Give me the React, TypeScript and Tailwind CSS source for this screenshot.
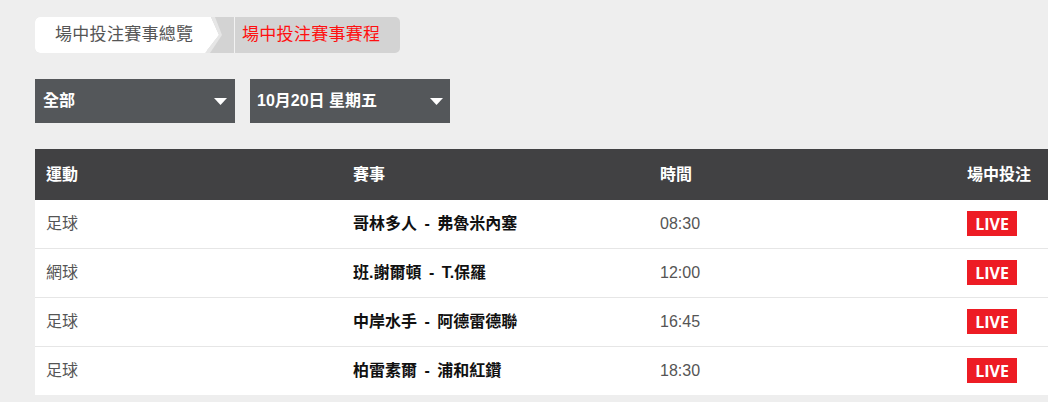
import React from "react";

const rows = [
  { sport: "足球", home: "哥林多人", away: "弗魯米內塞", time: "08:30" },
  { sport: "網球", home: "班.謝爾頓", away: "T.保羅", time: "12:00" },
  { sport: "足球", home: "中岸水手", away: "阿德雷德聯", time: "16:45" },
  { sport: "足球", home: "柏雷素爾", away: "浦和紅鑽", time: "18:30" },
];

const font = { fontFamily: '"Liberation Sans", "Noto Sans CJK TC", sans-serif' };

function Caret() {
  return (
    <svg width="13" height="7" viewBox="0 0 13 7" className="shrink-0">
      <polygon points="0,0 13,0 6.5,7" fill="#ffffff" />
    </svg>
  );
}

export default function App() {
  return (
    <div
      className="w-[1048px] h-[402px] bg-[#eeeeee] overflow-hidden pl-[35px] pt-[17px]"
      style={font}
    >
      {/* breadcrumb */}
      <div className="relative flex h-[36px] w-[365px] bg-[#d3d3d3] rounded-[5px]">
        <div className="flex items-center h-full w-[172px] bg-white rounded-l-[5px] pl-[20px] text-[17px] tracking-[0.3px] text-[#555555]">
          場中投注賽事總覽
        </div>
        <svg
          width="20"
          height="36"
          viewBox="0 0 20 36"
          className="absolute left-[170px] top-0"
        >
          <polygon points="0,0 6,0 14,18 0,36" fill="#ffffff" />
          <polygon points="6,0 10,0 17,18 5,36 0,36 14,18" fill="#e6e6e6" />
        </svg>
        <div className="ml-[27px] w-px h-full bg-[#f2f2f2]" />
        <div className="flex items-center h-full pl-[7px] text-[17px] tracking-[0.3px] text-[#ff1010]">
          場中投注賽事賽程
        </div>
      </div>

      {/* dropdowns */}
      <div className="flex gap-[15px] mt-[26px]">
        <div className="flex items-center justify-between w-[200px] h-[44px] bg-[#54575a] pl-[8px] pr-[8px] text-white font-bold text-[16px]">
          <span>全部</span>
          <Caret />
        </div>
        <div className="flex items-center justify-between w-[200px] h-[44px] bg-[#54575a] pl-[7px] pr-[7px] text-white font-bold text-[16px]">
          <span>10月20日 星期五</span>
          <Caret />
        </div>
      </div>

      {/* table */}
      <div className="mt-[26px] w-[1013px]">
        <div className="grid grid-cols-[307px_307px_307px_1fr] h-[51px] items-center bg-[#414143] text-white font-bold text-[16px]">
          <div className="pl-[11px]">運動</div>
          <div className="pl-[11px]">賽事</div>
          <div className="pl-[11px]">時間</div>
          <div className="pl-[11px]">場中投注</div>
        </div>
        {rows.map((r, i) => (
          <div
            key={i}
            className={
              i < rows.length - 1
                ? "grid grid-cols-[307px_307px_307px_1fr] h-[49px] items-center bg-white border-b border-[#e6e6e6]"
                : "grid grid-cols-[307px_307px_307px_1fr] h-[48px] items-center bg-white"
            }
          >
            <div className="pl-[11px] text-[16px] text-[#555555]">{r.sport}</div>
            <div className="pl-[11px] text-[16px] font-bold text-[#111111]">
              {r.home}
              <span className="mx-[3px]"> - </span>
              {r.away}
            </div>
            <div className="pl-[11px] text-[16px] text-[#555555]">{r.time}</div>
            <div className="pl-[11px]">
              <div
                className="inline-flex items-center justify-center w-[50px] h-[25px] bg-[#ed1c24] text-white font-bold text-[16px]"
                style={{ fontFamily: '"Open Sans", sans-serif' }}
              >
                LIVE
              </div>
            </div>
          </div>
        ))}
      </div>
    </div>
  );
}
